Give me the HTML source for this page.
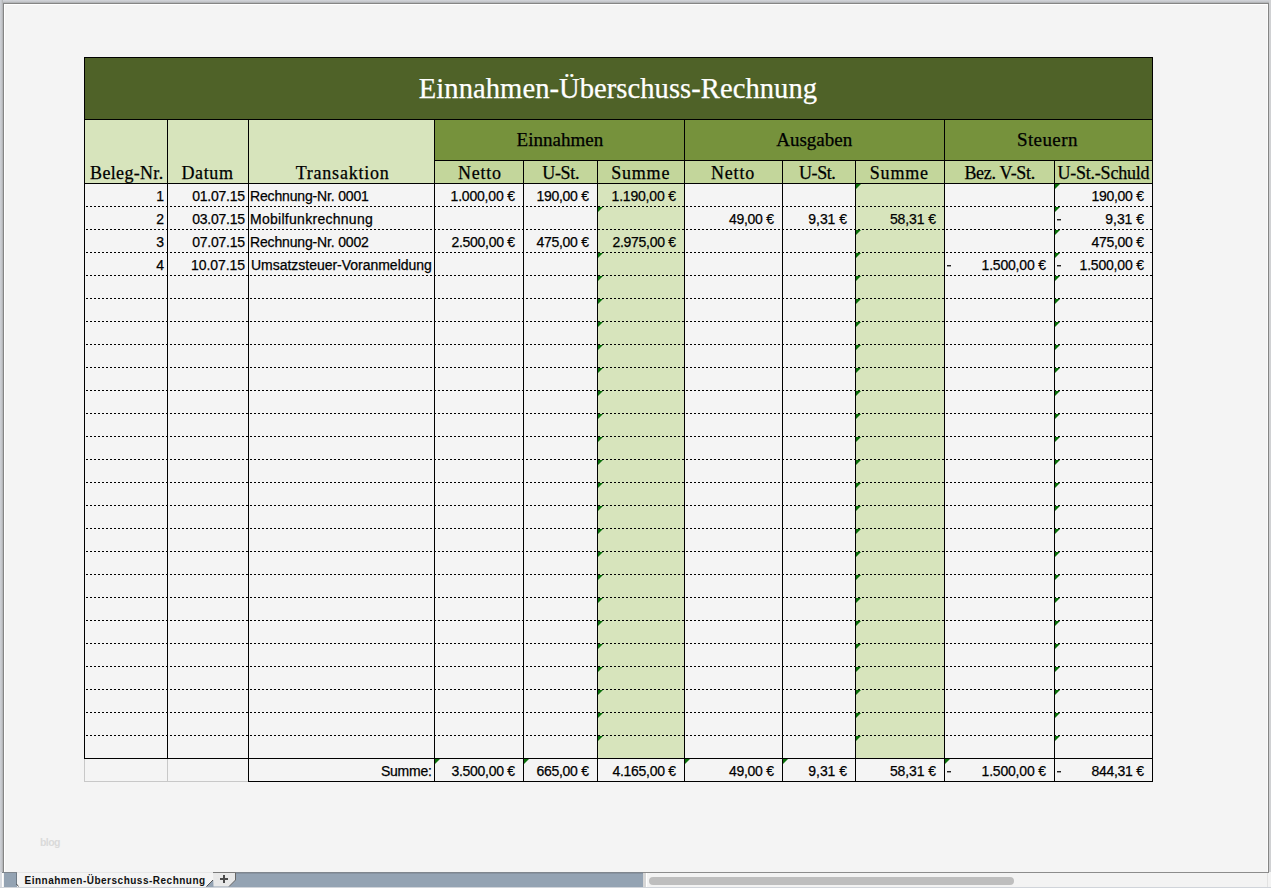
<!DOCTYPE html>
<html><head><meta charset="utf-8"><title>Einnahmen-Überschuss-Rechnung</title>
<style>
html,body{margin:0;padding:0;}
body{width:1271px;height:888px;position:relative;overflow:hidden;background:#F4F4F4;}
body div{position:absolute;}
.t{white-space:nowrap;}
.serif{font-family:"Liberation Serif",serif;-webkit-text-stroke:0.25px currentColor;}
.sans{font-family:"Liberation Sans",sans-serif;color:#000;-webkit-text-stroke:0.25px #000;}
.tri{width:0;height:0;border-top:5px solid #0A6E0A;border-right:5px solid transparent;}
</style></head><body>
<!-- window frame -->
<div style="left:0;top:0;width:1271px;height:3px;background:linear-gradient(#D3D5DA,#C4C6CA 60%,#A9ABAD)"></div>
<div style="left:0;top:0;width:3px;height:872px;background:linear-gradient(90deg,#CFD2D8,#C2C4C8 60%,#ABADAF)"></div>
<div style="left:1269px;top:0;width:2px;height:872px;background:#D0D1D3"></div>
<div style="left:3px;top:3px;width:1266px;height:1px;background:#858585"></div>
<div style="left:3px;top:3px;width:1px;height:870px;background:#858585"></div>
<div style="left:1268px;top:3px;width:1px;height:870px;background:#858585"></div>
<div style="left:4px;top:4px;width:1264px;height:1px;background:#FFFFFF"></div>
<div style="left:4px;top:4px;width:1px;height:868px;background:#FFFFFF"></div>
<div style="left:1267px;top:4px;width:1px;height:868px;background:#FBFBFB"></div>
<div style="left:84px;top:57px;width:1068px;height:62px;background:#4F6228"></div>
<div style="left:84px;top:119px;width:350px;height:64px;background:#D7E4BC"></div>
<div style="left:434px;top:119px;width:718px;height:41px;background:#76923C"></div>
<div style="left:434px;top:160px;width:718px;height:23px;background:#C3D69B"></div>
<div style="left:597px;top:183px;width:87px;height:575px;background:#D7E4BC"></div>
<div style="left:855px;top:183px;width:89px;height:575px;background:#D7E4BC"></div>
<div style="left:84px;top:206px;width:1068px;height:1px;background:repeating-linear-gradient(90deg,transparent 0 2px,#000 2px 4px)"></div>
<div style="left:84px;top:229px;width:1068px;height:1px;background:repeating-linear-gradient(90deg,transparent 0 2px,#000 2px 4px)"></div>
<div style="left:84px;top:252px;width:1068px;height:1px;background:repeating-linear-gradient(90deg,transparent 0 2px,#000 2px 4px)"></div>
<div style="left:84px;top:275px;width:1068px;height:1px;background:repeating-linear-gradient(90deg,transparent 0 2px,#000 2px 4px)"></div>
<div style="left:84px;top:298px;width:1068px;height:1px;background:repeating-linear-gradient(90deg,transparent 0 2px,#000 2px 4px)"></div>
<div style="left:84px;top:321px;width:1068px;height:1px;background:repeating-linear-gradient(90deg,transparent 0 2px,#000 2px 4px)"></div>
<div style="left:84px;top:344px;width:1068px;height:1px;background:repeating-linear-gradient(90deg,transparent 0 2px,#000 2px 4px)"></div>
<div style="left:84px;top:367px;width:1068px;height:1px;background:repeating-linear-gradient(90deg,transparent 0 2px,#000 2px 4px)"></div>
<div style="left:84px;top:390px;width:1068px;height:1px;background:repeating-linear-gradient(90deg,transparent 0 2px,#000 2px 4px)"></div>
<div style="left:84px;top:413px;width:1068px;height:1px;background:repeating-linear-gradient(90deg,transparent 0 2px,#000 2px 4px)"></div>
<div style="left:84px;top:436px;width:1068px;height:1px;background:repeating-linear-gradient(90deg,transparent 0 2px,#000 2px 4px)"></div>
<div style="left:84px;top:459px;width:1068px;height:1px;background:repeating-linear-gradient(90deg,transparent 0 2px,#000 2px 4px)"></div>
<div style="left:84px;top:482px;width:1068px;height:1px;background:repeating-linear-gradient(90deg,transparent 0 2px,#000 2px 4px)"></div>
<div style="left:84px;top:505px;width:1068px;height:1px;background:repeating-linear-gradient(90deg,transparent 0 2px,#000 2px 4px)"></div>
<div style="left:84px;top:528px;width:1068px;height:1px;background:repeating-linear-gradient(90deg,transparent 0 2px,#000 2px 4px)"></div>
<div style="left:84px;top:551px;width:1068px;height:1px;background:repeating-linear-gradient(90deg,transparent 0 2px,#000 2px 4px)"></div>
<div style="left:84px;top:574px;width:1068px;height:1px;background:repeating-linear-gradient(90deg,transparent 0 2px,#000 2px 4px)"></div>
<div style="left:84px;top:597px;width:1068px;height:1px;background:repeating-linear-gradient(90deg,transparent 0 2px,#000 2px 4px)"></div>
<div style="left:84px;top:620px;width:1068px;height:1px;background:repeating-linear-gradient(90deg,transparent 0 2px,#000 2px 4px)"></div>
<div style="left:84px;top:643px;width:1068px;height:1px;background:repeating-linear-gradient(90deg,transparent 0 2px,#000 2px 4px)"></div>
<div style="left:84px;top:666px;width:1068px;height:1px;background:repeating-linear-gradient(90deg,transparent 0 2px,#000 2px 4px)"></div>
<div style="left:84px;top:689px;width:1068px;height:1px;background:repeating-linear-gradient(90deg,transparent 0 2px,#000 2px 4px)"></div>
<div style="left:84px;top:712px;width:1068px;height:1px;background:repeating-linear-gradient(90deg,transparent 0 2px,#000 2px 4px)"></div>
<div style="left:84px;top:735px;width:1068px;height:1px;background:repeating-linear-gradient(90deg,transparent 0 2px,#000 2px 4px)"></div>
<div style="left:84px;top:758px;width:1px;height:24px;background:#C8C8C8"></div>
<div style="left:167px;top:758px;width:1px;height:24px;background:#C8C8C8"></div>
<div style="left:84px;top:781px;width:165px;height:1px;background:#C8C8C8"></div>
<div style="left:84px;top:57px;width:1069px;height:1px;background:#000"></div>
<div style="left:84px;top:119px;width:1069px;height:1px;background:#000"></div>
<div style="left:434px;top:160px;width:719px;height:1px;background:#000"></div>
<div style="left:84px;top:183px;width:1069px;height:1px;background:#000"></div>
<div style="left:84px;top:758px;width:1069px;height:1px;background:#000"></div>
<div style="left:248px;top:781px;width:905px;height:1px;background:#000"></div>
<div style="left:84px;top:57px;width:1px;height:702px;background:#000"></div>
<div style="left:1152px;top:57px;width:1px;height:725px;background:#000"></div>
<div style="left:167px;top:119px;width:1px;height:640px;background:#000"></div>
<div style="left:248px;top:119px;width:1px;height:663px;background:#000"></div>
<div style="left:434px;top:119px;width:1px;height:663px;background:#000"></div>
<div style="left:684px;top:119px;width:1px;height:663px;background:#000"></div>
<div style="left:944px;top:119px;width:1px;height:663px;background:#000"></div>
<div style="left:523px;top:160px;width:1px;height:622px;background:#000"></div>
<div style="left:597px;top:160px;width:1px;height:622px;background:#000"></div>
<div style="left:782px;top:160px;width:1px;height:622px;background:#000"></div>
<div style="left:855px;top:160px;width:1px;height:622px;background:#000"></div>
<div style="left:1054px;top:160px;width:1px;height:622px;background:#000"></div>
<div class="tri" style="left:856px;top:184px"></div>
<div class="tri" style="left:1055px;top:184px"></div>
<div class="tri" style="left:598px;top:207px"></div>
<div class="tri" style="left:1055px;top:207px"></div>
<div class="tri" style="left:856px;top:230px"></div>
<div class="tri" style="left:1055px;top:230px"></div>
<div class="tri" style="left:598px;top:253px"></div>
<div class="tri" style="left:856px;top:253px"></div>
<div class="tri" style="left:1055px;top:253px"></div>
<div class="tri" style="left:598px;top:276px"></div>
<div class="tri" style="left:856px;top:276px"></div>
<div class="tri" style="left:1055px;top:276px"></div>
<div class="tri" style="left:598px;top:299px"></div>
<div class="tri" style="left:856px;top:299px"></div>
<div class="tri" style="left:1055px;top:299px"></div>
<div class="tri" style="left:598px;top:322px"></div>
<div class="tri" style="left:856px;top:322px"></div>
<div class="tri" style="left:1055px;top:322px"></div>
<div class="tri" style="left:598px;top:345px"></div>
<div class="tri" style="left:856px;top:345px"></div>
<div class="tri" style="left:1055px;top:345px"></div>
<div class="tri" style="left:598px;top:368px"></div>
<div class="tri" style="left:856px;top:368px"></div>
<div class="tri" style="left:1055px;top:368px"></div>
<div class="tri" style="left:598px;top:391px"></div>
<div class="tri" style="left:856px;top:391px"></div>
<div class="tri" style="left:1055px;top:391px"></div>
<div class="tri" style="left:598px;top:414px"></div>
<div class="tri" style="left:856px;top:414px"></div>
<div class="tri" style="left:1055px;top:414px"></div>
<div class="tri" style="left:598px;top:437px"></div>
<div class="tri" style="left:856px;top:437px"></div>
<div class="tri" style="left:1055px;top:437px"></div>
<div class="tri" style="left:598px;top:460px"></div>
<div class="tri" style="left:856px;top:460px"></div>
<div class="tri" style="left:1055px;top:460px"></div>
<div class="tri" style="left:598px;top:483px"></div>
<div class="tri" style="left:856px;top:483px"></div>
<div class="tri" style="left:1055px;top:483px"></div>
<div class="tri" style="left:598px;top:506px"></div>
<div class="tri" style="left:856px;top:506px"></div>
<div class="tri" style="left:1055px;top:506px"></div>
<div class="tri" style="left:598px;top:529px"></div>
<div class="tri" style="left:856px;top:529px"></div>
<div class="tri" style="left:1055px;top:529px"></div>
<div class="tri" style="left:598px;top:552px"></div>
<div class="tri" style="left:856px;top:552px"></div>
<div class="tri" style="left:1055px;top:552px"></div>
<div class="tri" style="left:598px;top:575px"></div>
<div class="tri" style="left:856px;top:575px"></div>
<div class="tri" style="left:1055px;top:575px"></div>
<div class="tri" style="left:598px;top:598px"></div>
<div class="tri" style="left:856px;top:598px"></div>
<div class="tri" style="left:1055px;top:598px"></div>
<div class="tri" style="left:598px;top:621px"></div>
<div class="tri" style="left:856px;top:621px"></div>
<div class="tri" style="left:1055px;top:621px"></div>
<div class="tri" style="left:598px;top:644px"></div>
<div class="tri" style="left:856px;top:644px"></div>
<div class="tri" style="left:1055px;top:644px"></div>
<div class="tri" style="left:598px;top:667px"></div>
<div class="tri" style="left:856px;top:667px"></div>
<div class="tri" style="left:1055px;top:667px"></div>
<div class="tri" style="left:598px;top:690px"></div>
<div class="tri" style="left:856px;top:690px"></div>
<div class="tri" style="left:1055px;top:690px"></div>
<div class="tri" style="left:598px;top:713px"></div>
<div class="tri" style="left:856px;top:713px"></div>
<div class="tri" style="left:1055px;top:713px"></div>
<div class="tri" style="left:598px;top:736px"></div>
<div class="tri" style="left:856px;top:736px"></div>
<div class="tri" style="left:1055px;top:736px"></div>
<div class="tri" style="left:435px;top:759px"></div>
<div class="tri" style="left:524px;top:759px"></div>
<div class="tri" style="left:685px;top:759px"></div>
<div class="tri" style="left:783px;top:759px"></div>
<div class="tri" style="left:945px;top:759px"></div>
<div class="t serif" style="left:84.0px;width:1068px;top:75.4px;font-size:28.6px;line-height:28.6px;text-align:center;color:#fff;letter-spacing:0.043px">Einnahmen-Überschuss-Rechnung</div>
<div class="t serif" style="left:434.9px;width:250px;top:130px;font-size:19px;line-height:19px;text-align:center;color:#000;letter-spacing:0.021px">Einnahmen</div>
<div class="t serif" style="left:684.2px;width:260px;top:130px;font-size:19px;line-height:19px;text-align:center;color:#000;letter-spacing:-0.001px">Ausgaben</div>
<div class="t serif" style="left:943.4px;width:208px;top:130px;font-size:19px;line-height:19px;text-align:center;color:#000;letter-spacing:0.4px">Steuern</div>
<div class="t serif" style="left:85.3px;width:83px;top:163.5px;font-size:18px;line-height:18px;text-align:center;color:#000;letter-spacing:0.325px">Beleg-Nr.</div>
<div class="t serif" style="left:167.0px;width:81px;top:163.5px;font-size:18px;line-height:18px;text-align:center;color:#000;letter-spacing:0.6px">Datum</div>
<div class="t serif" style="left:249.6px;width:186px;top:163.5px;font-size:18px;line-height:18px;text-align:center;color:#000;letter-spacing:0.76px">Transaktion</div>
<div class="t serif" style="left:435.3px;width:89px;top:163.5px;font-size:18px;line-height:18px;text-align:center;color:#000;letter-spacing:0.75px">Netto</div>
<div class="t serif" style="left:523.7px;width:74px;top:163.5px;font-size:18px;line-height:18px;text-align:center;color:#000;letter-spacing:-0.35px">U-St.</div>
<div class="t serif" style="left:597.2px;width:87px;top:163.5px;font-size:18px;line-height:18px;text-align:center;color:#000;letter-spacing:0.8px">Summe</div>
<div class="t serif" style="left:684.0px;width:98px;top:163.5px;font-size:18px;line-height:18px;text-align:center;color:#000;letter-spacing:0.8px">Netto</div>
<div class="t serif" style="left:780.7px;width:73px;top:163.5px;font-size:18px;line-height:18px;text-align:center;color:#000;letter-spacing:-0.45px">U-St.</div>
<div class="t serif" style="left:854.8px;width:89px;top:163.5px;font-size:18px;line-height:18px;text-align:center;color:#000;letter-spacing:0.8px">Summe</div>
<div class="t serif" style="left:944.7px;width:110px;top:163.5px;font-size:18px;line-height:18px;text-align:center;color:#000;letter-spacing:-0.291px">Bez. V-St.</div>
<div class="t serif" style="left:1054.4px;width:98px;top:163.5px;font-size:18px;line-height:18px;text-align:center;color:#000;letter-spacing:-0.216px">U-St.-Schuld</div>
<div class="t sans" style="right:1107.0px;top:189px;font-size:14px;line-height:14px;letter-spacing:0.0px">1</div>
<div class="t sans" style="right:1026.23px;top:189px;font-size:14px;line-height:14px;letter-spacing:-0.23px">01.07.15</div>
<div class="t sans" style="left:250.0px;top:189px;font-size:14px;line-height:14px;letter-spacing:-0.161px">Rechnung-Nr. 0001</div>
<div class="t sans" style="right:756.19px;top:189px;font-size:14px;line-height:14px;letter-spacing:-0.192px">1.000,00 €</div>
<div class="t sans" style="right:682.27px;top:189px;font-size:14px;line-height:14px;letter-spacing:-0.274px">190,00 €</div>
<div class="t sans" style="right:595.19px;top:189px;font-size:14px;line-height:14px;letter-spacing:-0.192px">1.190,00 €</div>
<div class="t sans" style="right:127.27px;top:189px;font-size:14px;line-height:14px;letter-spacing:-0.274px">190,00 €</div>
<div class="t sans" style="right:1107.0px;top:212px;font-size:14px;line-height:14px;letter-spacing:0.0px">2</div>
<div class="t sans" style="right:1026.23px;top:212px;font-size:14px;line-height:14px;letter-spacing:-0.23px">03.07.15</div>
<div class="t sans" style="left:250.0px;top:212px;font-size:14px;line-height:14px;letter-spacing:0.28px">Mobilfunkrechnung</div>
<div class="t sans" style="right:497.26px;top:212px;font-size:14px;line-height:14px;letter-spacing:-0.265px">49,00 €</div>
<div class="t sans" style="right:424.04px;top:212px;font-size:14px;line-height:14px;letter-spacing:-0.04px">9,31 €</div>
<div class="t sans" style="right:335.1px;top:212px;font-size:14px;line-height:14px;letter-spacing:-0.099px">58,31 €</div>
<div style="left:1057px;top:219px;width:4px;height:1px;background:#222"></div>
<div style="left:1057px;top:220px;width:4px;height:1px;background:#999"></div>
<div class="t sans" style="right:127.04px;top:212px;font-size:14px;line-height:14px;letter-spacing:-0.04px">9,31 €</div>
<div class="t sans" style="right:1107.0px;top:235px;font-size:14px;line-height:14px;letter-spacing:0.0px">3</div>
<div class="t sans" style="right:1026.23px;top:235px;font-size:14px;line-height:14px;letter-spacing:-0.23px">07.07.15</div>
<div class="t sans" style="left:250.0px;top:235px;font-size:14px;line-height:14px;letter-spacing:-0.161px">Rechnung-Nr. 0002</div>
<div class="t sans" style="right:756.3px;top:235px;font-size:14px;line-height:14px;letter-spacing:-0.303px">2.500,00 €</div>
<div class="t sans" style="right:682.27px;top:235px;font-size:14px;line-height:14px;letter-spacing:-0.274px">475,00 €</div>
<div class="t sans" style="right:595.3px;top:235px;font-size:14px;line-height:14px;letter-spacing:-0.303px">2.975,00 €</div>
<div class="t sans" style="right:127.27px;top:235px;font-size:14px;line-height:14px;letter-spacing:-0.274px">475,00 €</div>
<div class="t sans" style="right:1107.0px;top:258px;font-size:14px;line-height:14px;letter-spacing:0.0px">4</div>
<div class="t sans" style="right:1026.09px;top:258px;font-size:14px;line-height:14px;letter-spacing:-0.087px">10.07.15</div>
<div class="t sans" style="left:251.0px;top:258px;font-size:14px;line-height:14px;letter-spacing:-0.021px">Umsatzsteuer-Voranmeldung</div>
<div style="left:947px;top:265px;width:4px;height:1px;background:#222"></div>
<div style="left:947px;top:266px;width:4px;height:1px;background:#999"></div>
<div class="t sans" style="right:225.19px;top:258px;font-size:14px;line-height:14px;letter-spacing:-0.192px">1.500,00 €</div>
<div style="left:1057px;top:265px;width:4px;height:1px;background:#222"></div>
<div style="left:1057px;top:266px;width:4px;height:1px;background:#999"></div>
<div class="t sans" style="right:127.19px;top:258px;font-size:14px;line-height:14px;letter-spacing:-0.192px">1.500,00 €</div>
<div class="t sans" style="right:839.2px;top:764px;font-size:14px;line-height:14px;letter-spacing:-0.2px">Summe:</div>
<div class="t sans" style="right:756.3px;top:764px;font-size:14px;line-height:14px;letter-spacing:-0.303px">3.500,00 €</div>
<div class="t sans" style="right:682.27px;top:764px;font-size:14px;line-height:14px;letter-spacing:-0.274px">665,00 €</div>
<div class="t sans" style="right:595.3px;top:764px;font-size:14px;line-height:14px;letter-spacing:-0.303px">4.165,00 €</div>
<div class="t sans" style="right:497.26px;top:764px;font-size:14px;line-height:14px;letter-spacing:-0.265px">49,00 €</div>
<div class="t sans" style="right:424.04px;top:764px;font-size:14px;line-height:14px;letter-spacing:-0.04px">9,31 €</div>
<div class="t sans" style="right:335.1px;top:764px;font-size:14px;line-height:14px;letter-spacing:-0.099px">58,31 €</div>
<div style="left:947px;top:771px;width:4px;height:1px;background:#222"></div>
<div style="left:947px;top:772px;width:4px;height:1px;background:#999"></div>
<div class="t sans" style="right:225.19px;top:764px;font-size:14px;line-height:14px;letter-spacing:-0.192px">1.500,00 €</div>
<div style="left:1057px;top:771px;width:4px;height:1px;background:#222"></div>
<div style="left:1057px;top:772px;width:4px;height:1px;background:#999"></div>
<div class="t sans" style="right:127.27px;top:764px;font-size:14px;line-height:14px;letter-spacing:-0.274px">844,31 €</div>
<div class="t sans" style="left:40px;top:837px;font-size:10.5px;line-height:11px;color:#DADADA;font-weight:bold;letter-spacing:-0.6px;-webkit-text-stroke:0">blog</div>
<!-- bottom bar -->
<svg style="position:absolute;left:0;top:866px" width="1271" height="22" viewBox="0 866 1271 22">
<g shape-rendering="crispEdges">
<rect x="0" y="872" width="1271" height="16" fill="#F3F3F3"/>
<rect x="0" y="872" width="2" height="16" fill="#D9DCE1"/>
<rect x="2" y="872" width="1" height="16" fill="#FFFFFF"/>
<rect x="2" y="872" width="15" height="1" fill="#7F868E"/>
<rect x="4" y="873" width="13" height="14" fill="#94A3B3"/>
<rect x="16" y="873" width="1" height="12" fill="#6F7A86"/>
<rect x="17" y="872" width="196" height="1" fill="#E6E6E6"/>
<rect x="236" y="873" width="407" height="14" fill="#94A3B3"/>
<rect x="206" y="880" width="30" height="7" fill="#94A3B3"/>
<rect x="213" y="872" width="430" height="1" fill="#7F868E"/>
<rect x="236" y="873" width="407" height="1" fill="#8793A1"/>
<rect x="643" y="872" width="626" height="1" fill="#8C8C8C"/>
<rect x="643" y="873" width="3" height="14" fill="#D6D6D6"/>
<rect x="646" y="873" width="1" height="14" fill="#FFFFFF"/>
<rect x="1267" y="873" width="1" height="14" fill="#E2E2E2"/>
<rect x="0" y="887" width="1271" height="1" fill="#D0D4DA"/>
</g>
<path d="M17 873 H213 V880 L206.5 886.5 H19.5 L17 884 Z" fill="#F4F4F4"/>
<path d="M213 880 L206.5 886.5" stroke="#555" stroke-width="1" fill="none"/>
<path d="M16.5 884 L18.5 886.5" stroke="#555" stroke-width="1" fill="none"/>
<path d="M213 873 H235.5 V880 L229 886.5 H213.5 Z" fill="#E8E8E8"/>
<path d="M235.5 873 V880 L229 886.5" stroke="#666" stroke-width="1" fill="none"/>
<rect x="213" y="872" width="23" height="1" fill="#7A7A7A" shape-rendering="crispEdges"/>
<rect x="220" y="878" width="8" height="2" fill="#4A4A4A" shape-rendering="crispEdges"/>
<rect x="223" y="875" width="2" height="8" fill="#4A4A4A" shape-rendering="crispEdges"/>
<rect x="649" y="877" width="365" height="8" rx="4" fill="#BEBEBE"/>
</svg>
<div class="t sans" style="left:24.5px;top:875.5px;font-size:10px;line-height:10px;font-weight:bold;letter-spacing:0.5px;color:#111;-webkit-text-stroke:0">Einnahmen-Überschuss-Rechnung</div>
</body></html>
